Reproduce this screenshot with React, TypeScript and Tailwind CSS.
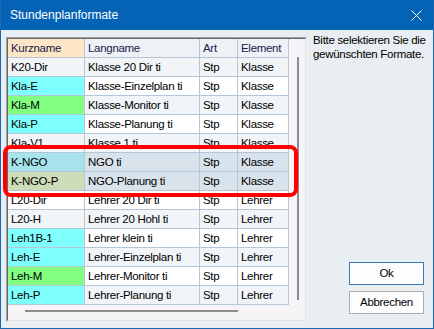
import React from 'react';

type Row = { kurz: string; lang: string; art: string; element: string; color?: string; selected?: boolean };

const rows: Row[] = [
  { kurz: 'K20-Dir', lang: 'Klasse 20 Dir ti', art: 'Stp', element: 'Klasse' },
  { kurz: 'Kla-E', lang: 'Klasse-Einzelplan ti', art: 'Stp', element: 'Klasse', color: 'bg-[#80ffff]' },
  { kurz: 'Kla-M', lang: 'Klasse-Monitor ti', art: 'Stp', element: 'Klasse', color: 'bg-[#80ff80]' },
  { kurz: 'Kla-P', lang: 'Klasse-Planung ti', art: 'Stp', element: 'Klasse', color: 'bg-[#80ffff]' },
  { kurz: 'Kla-V1', lang: 'Klasse 1 ti', art: 'Stp', element: 'Klasse' },
  { kurz: 'K-NGO', lang: 'NGO ti', art: 'Stp', element: 'Klasse', color: 'bg-[#a6e3ec]', selected: true },
  { kurz: 'K-NGO-P', lang: 'NGO-Planung ti', art: 'Stp', element: 'Klasse', color: 'bg-[#cfdcb8]', selected: true },
  { kurz: 'L20-Dir', lang: 'Lehrer 20 Dir ti', art: 'Stp', element: 'Lehrer' },
  { kurz: 'L20-H', lang: 'Lehrer 20 Hohl ti', art: 'Stp', element: 'Lehrer' },
  { kurz: 'Leh1B-1', lang: 'Lehrer klein ti', art: 'Stp', element: 'Lehrer', color: 'bg-[#80ffff]' },
  { kurz: 'Leh-E', lang: 'Lehrer-Einzelplan ti', art: 'Stp', element: 'Lehrer', color: 'bg-[#80ffff]' },
  { kurz: 'Leh-M', lang: 'Lehrer-Monitor ti', art: 'Stp', element: 'Lehrer', color: 'bg-[#80ff80]' },
  { kurz: 'Leh-P', lang: 'Lehrer-Planung ti', art: 'Stp', element: 'Lehrer', color: 'bg-[#80ffff]' },
];

const cell = 'h-[19px] border-r border-b border-[#b5c7d6] pl-[3px] leading-[18px] whitespace-nowrap overflow-hidden';

function Grid() {
  return (
    <div className="mt-[7px] ml-[5px] h-[285px] w-[301px] shrink-0 border border-[#a0a0a0] border-r-[#f0f0f0] border-b-[#f0f0f0]">
      <div className="flex h-full w-full flex-col border border-[#696969] border-r-[#e3e3e3] border-b-[#e3e3e3] bg-[#f6f4f6]">
        <div className="flex h-[266px]">
          <div className="grid w-[281px] grid-cols-[77px_115px_38px_51px] content-start text-[11.5px] tracking-[-0.3px] text-black">
            <div className={`${cell} bg-[#fce6c6] text-[#1a1a4a]`}>Kurzname</div>
            <div className={`${cell} bg-[#eef1f5] text-[#1a1a4a]`}>Langname</div>
            <div className={`${cell} bg-[#eef1f5] text-[#1a1a4a]`}>Art</div>
            <div className={`${cell} bg-[#eef1f5] text-[#1a1a4a]`}>Element</div>
            {rows.map((r, i) => {
              const base = r.selected ? 'bg-[#d9e3ec]' : i % 2 === 0 ? 'bg-[#f1f5f8]' : 'bg-white';
              return (
                <React.Fragment key={r.kurz}>
                  <div className={`${cell} ${r.color ?? base}`}>{r.kurz}</div>
                  <div className={`${cell} ${base}`}>{r.lang}</div>
                  <div className={`${cell} ${base}`}>{r.art}</div>
                  <div className={`${cell} ${base}`}>{r.element}</div>
                </React.Fragment>
              );
            })}
          </div>
          <div className="flex w-[16px] justify-center pt-[18px]">
            <div className="ml-[1px] h-[243px] w-[2px] bg-[#8c8c8c]" />
          </div>
        </div>
        <div className="flex flex-1 items-start pt-[5px] pl-[17px]">
          <div className="h-[2px] w-[213px] bg-[#8c8c8c]" />
        </div>
      </div>
    </div>
  );
}

export default function App() {
  return (
    <div className="relative flex h-[329px] w-[434px] flex-col border border-t-0 border-[#1b67b0] bg-[#e9eef3] font-['Liberation_Sans',Arial,sans-serif]">
      <div className="flex h-[30px] items-center justify-between bg-[#0563b6] pr-[10px] pl-[9px] text-[12px] text-white">
        <span>Stundenplanformate</span>
        <svg width="11" height="11" viewBox="0 0 11 11" className="mr-[1px]">
          <path d="M0.5 0.5 L10.5 10.5 M10.5 0.5 L0.5 10.5" stroke="white" strokeWidth="1" />
        </svg>
      </div>
      <div className="flex flex-1">
        <Grid />
        <div className="flex min-w-0 flex-1 flex-col pt-[3px] pb-[14px] pl-[6px] pr-[9px]">
          <p className="whitespace-nowrap text-[11.5px] leading-[14px] tracking-[-0.3px] text-black">
            Bitte selektieren Sie die
            <br />
            gewünschten Formate.
          </p>
          <div className="mt-auto flex flex-col items-end gap-[6px] text-[11.5px] tracking-[-0.3px] text-black">
            <button className="h-[23px] w-[75px] border border-[#3c78b4] bg-[#fdfdfd]">Ok</button>
            <button className="h-[23px] w-[75px] border border-[#adadad] bg-[#fdfdfd]">Abbrechen</button>
          </div>
        </div>
      </div>
      <div className="pointer-events-none absolute top-[145px] left-[2px] h-[52px] w-[295px] rounded-[8px] border-[4px] border-[#ff0000]" />
    </div>
  );
}
